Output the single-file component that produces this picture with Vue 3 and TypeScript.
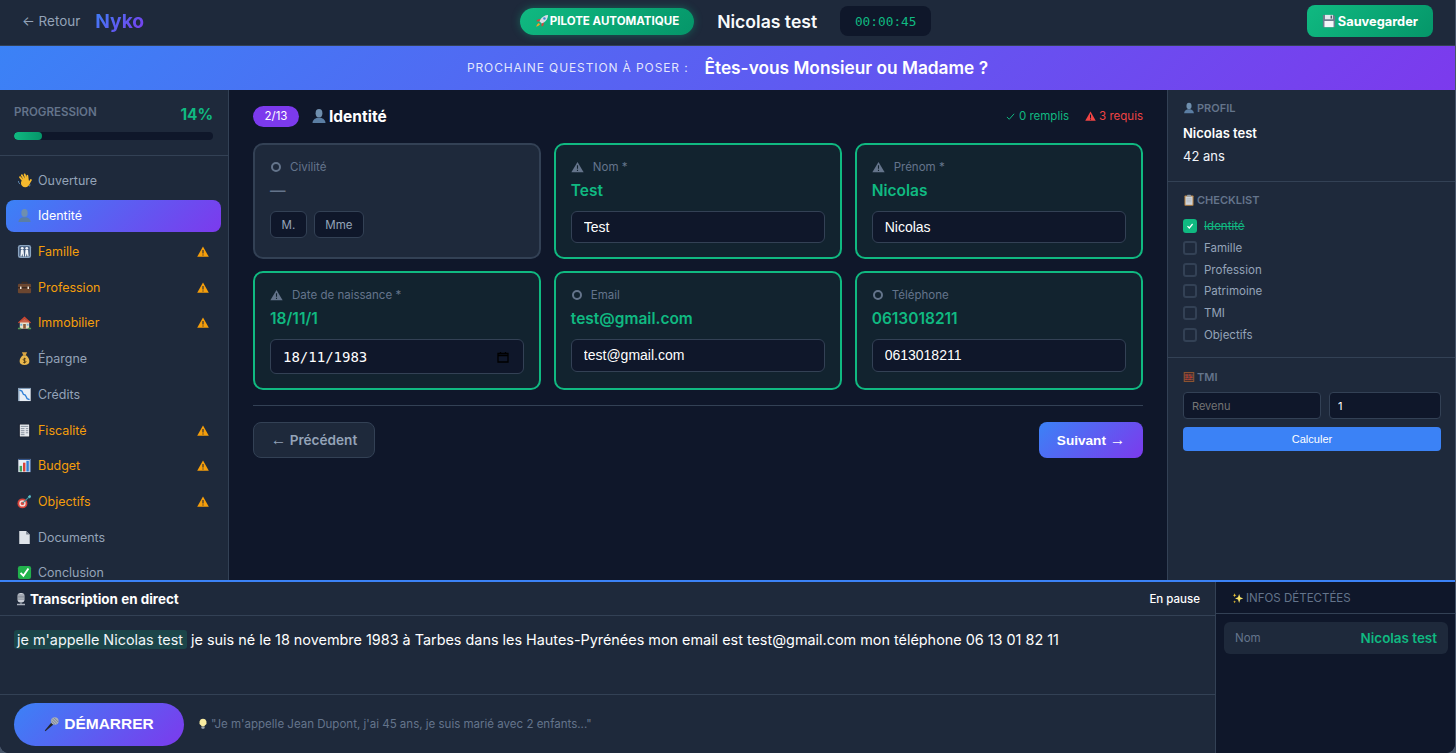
<script setup lang="ts">
interface NavItem { icon: string; label: string; warn?: boolean; active?: boolean }
const nav: NavItem[] = [
  { icon: 'wave', label: 'Ouverture' },
  { icon: 'bust', label: 'Identité', active: true },
  { icon: 'family', label: 'Famille', warn: true },
  { icon: 'case', label: 'Profession', warn: true },
  { icon: 'house', label: 'Immobilier', warn: true },
  { icon: 'bag', label: 'Épargne' },
  { icon: 'down', label: 'Crédits' },
  { icon: 'receipt', label: 'Fiscalité', warn: true },
  { icon: 'bars', label: 'Budget', warn: true },
  { icon: 'target', label: 'Objectifs', warn: true },
  { icon: 'doc', label: 'Documents' },
  { icon: 'check', label: 'Conclusion' },
]
interface Field { label: string; value: string; input: string }
const row2: Field[] = [
  { label: 'Email', value: 'test@gmail.com', input: 'test@gmail.com' },
  { label: 'Téléphone', value: '0613018211', input: '0613018211' },
]
const row1: Field[] = [
  { label: 'Nom *', value: 'Test', input: 'Test' },
  { label: 'Prénom *', value: 'Nicolas', input: 'Nicolas' },
]
const checklist = ['Famille', 'Profession', 'Patrimoine', 'TMI', 'Objectifs']
</script>

<template>
  <svg class="defs" width="0" height="0" aria-hidden="true">
    <symbol id="i-wave" viewBox="0 0 16 16">
      <path d="M7 9 3.200 4.400M8.500 8 5.200 2.400M10 7.500 8.200 1.600M11.600 8 11 3M12.400 11.500 14.800 7.500" stroke="#f5b92e" stroke-width="2" stroke-linecap="round" fill="none"/>
      <circle cx="8.800" cy="10.600" r="4.600" fill="#f5b92e"/>
      <path d="M1.400 8.500c.2 1.500.8 2.600 1.800 3.400M14.200 12.500c-.3.800-.8 1.400-1.400 1.800" stroke="#7fb4e8" stroke-width=".7" fill="none"/>
    </symbol>
    <symbol id="i-bust" viewBox="0 0 16 16">
      <ellipse cx="8" cy="5.200" rx="3.400" ry="4.200" fill="#6f8fae"/>
      <path d="M1.500 15c0-3 2.600-4.600 4.800-5.200h3.400c2.200.6 4.800 2.200 4.800 5.200Z" fill="#5b7ea3"/>
    </symbol>
    <symbol id="i-family" viewBox="0 0 16 16">
      <rect x="1" y="1" width="14" height="14" rx="2.500" fill="#8aa4c0"/>
      <rect x="2.400" y="2.400" width="11.200" height="11.200" rx="1.500" fill="#42597a"/>
      <circle cx="5.600" cy="4.600" r="1.500" fill="#f0f4f8"/><circle cx="10.400" cy="4.600" r="1.500" fill="#f0f4f8"/>
      <path d="M4.200 6.400h2.800l.6 7H6.300L5.600 10l-.7 3.400H3.600ZM9 6.400h2.800l.6 7h-1.300L10.400 10l-.7 3.400H8.400Z" fill="#f0f4f8"/>
    </symbol>
    <symbol id="i-case" viewBox="0 0 16 16">
      <path d="M5.500 4V2.600h5V4" fill="none" stroke="#3d2b20" stroke-width="1.300"/>
      <rect x="1" y="4" width="14" height="10.200" rx="1.200" fill="#6b4630"/>
      <rect x="1" y="7.600" width="14" height="1.300" fill="#35251c"/>
      <rect x="3.200" y="7" width="1.600" height="2.600" fill="#efe6d8"/><rect x="11.200" y="7" width="1.600" height="2.600" fill="#efe6d8"/>
    </symbol>
    <symbol id="i-house" viewBox="0 0 16 16">
      <rect x="3" y="7" width="10" height="7.600" fill="#eadfc9"/>
      <path d="M1 8 8 1.600 15 8l-1 .8L8 3.600 2 8.800Z" fill="#d2452f"/>
      <path d="M8 3.600 13 7.500V8H3v-.5Z" fill="#c9624a"/>
      <rect x="6.600" y="9.600" width="2.800" height="5" fill="#8a5a3a"/>
      <rect x="3.600" y="9.400" width="2" height="2" fill="#6fb2de"/><rect x="10.400" y="9.400" width="2" height="2" fill="#6fb2de"/>
      <path d="M1 15.300h3.500v-1.700H1ZM11.500 15.300H15v-1.700h-3.500Z" fill="#4f9a55"/>
    </symbol>
    <symbol id="i-bag" viewBox="0 0 16 16">
      <path d="M5.200 1.400h5.600L9.300 4.400H6.700Z" fill="#d9a441"/>
      <path d="M6.400 4.600h3.200c2.200 1.800 3.600 4 3.600 6.200 0 2.800-2 4-5.200 4s-5.200-1.200-5.200-4c0-2.200 1.400-4.400 3.600-6.200Z" fill="#e8b64c"/>
      <path d="M9.600 8.600C9 7.900 6.600 7.800 6.600 9.200c0 1.500 3 .8 3 2.200 0 1.300-2.400 1.300-3.200.5M8 7.200v6" fill="none" stroke="#4a3512" stroke-width=".9"/>
    </symbol>
    <symbol id="i-down" viewBox="0 0 16 16">
      <rect x="1.400" y="1" width="13.200" height="14" fill="#e8eef5"/>
      <path d="M1.400 1h13.200v1.200H2.600V15H1.400Z" fill="#7f9bb8"/>
      <path d="M2.800 3.400 5.200 4.400 6.800 7.800 8.800 8.600l2 3.800 2.600 1" fill="none" stroke="#2f7fd6" stroke-width="1.400"/>
    </symbol>
    <symbol id="i-receipt" viewBox="0 0 16 16">
      <rect x="2" y="1" width="12" height="14" fill="#101827"/>
      <rect x="3" y="1.600" width="10" height="12.800" fill="#e6e9ee"/>
      <path d="M4 3.600h8M4 6h4M9.400 6H12M4 8.200h4M9.400 8.200H12M4 10.400h4M9.400 10.400H12M4 12.400h4" stroke="#6a7686" stroke-width=".8"/>
    </symbol>
    <symbol id="i-bars" viewBox="0 0 16 16">
      <rect x="1.400" y="1" width="13.200" height="14" fill="#e8eef5"/>
      <path d="M1.400 1h13.200v14h-1V2H1.400Z" fill="#33548a"/>
      <rect x="2.800" y="8.400" width="2.600" height="6" fill="#3fa35a"/>
      <rect x="6.400" y="5" width="2.600" height="9.400" fill="#d8433a"/>
      <rect x="10" y="3" width="2.600" height="11.400" fill="#2f7fd6"/>
    </symbol>
    <symbol id="i-target" viewBox="0 0 16 16">
      <circle cx="5.800" cy="10" r="5.300" fill="#d8433a"/><circle cx="5.800" cy="10" r="3.400" fill="#f3d9d4"/><circle cx="5.800" cy="10" r="1.800" fill="#d8433a"/>
      <path d="M6 9.800 13 3" stroke="#3f8f9a" stroke-width="1.300"/>
      <path d="M11.600 2.600 14 .8l1 2.200-1.400 1.800Z" fill="#5cc0c8"/>
    </symbol>
    <symbol id="i-doc" viewBox="0 0 16 16">
      <path d="M2.400 1h7.400l3.800 3.800V15H2.400Z" fill="#dfe4ea"/>
      <path d="M9.800 1v3.800h3.800Z" fill="#767f8c"/>
    </symbol>
    <symbol id="i-check" viewBox="0 0 16 16">
      <rect x="1" y="1" width="14" height="14" rx="2.400" fill="#22b14c"/>
      <path d="m3.800 8.400 3 3 5.400-7.600" fill="none" stroke="#fff" stroke-width="2"/>
    </symbol>
    <symbol id="i-studio" viewBox="0 0 16 16">
      <rect x="4" y="1" width="8" height="11" rx="3.500" fill="#c9ced6"/>
      <path d="M4 3.400h8M4 5h8M4 6.600h8M4 8.200h8" stroke="#5d6673" stroke-width=".7"/>
      <path d="M7.400 12h1.200v1.800H7.400ZM3.400 13.400h9.200V15H3.400Z" fill="#aab1bc"/>
    </symbol>
    <symbol id="i-mic" viewBox="0 0 16 16">
      <path d="m1.400 15.200-.6-.8 6.600-8 2 2Z" fill="#23262e"/>
      <circle cx="10.800" cy="5" r="3.800" fill="#aab1bc"/>
      <path d="M8.400 3 12.800 7.400M10 1.800l4.200 4.200M7.600 5l3.400 3.400" stroke="#5d6673" stroke-width=".6"/>
    </symbol>
    <symbol id="i-bulb" viewBox="0 0 16 16">
      <path d="M8 1a4.800 4.800 0 0 0-2.800 8.700c.6.500.8 1 .8 1.700h4c0-.7.2-1.200.8-1.700A4.800 4.800 0 0 0 8 1Z" fill="#f8eba0"/>
      <rect x="6.100" y="11.600" width="3.800" height="2.800" rx=".6" fill="#9aa3ae"/>
    </symbol>
    <symbol id="i-rocket" viewBox="0 0 16 16">
      <path d="M15 1c-3.600.2-6.400 1.800-8.600 4.800L4.800 8 8 11.200l2.200-1.600C13.200 7.400 14.800 4.600 15 1Z" fill="#d7dde6"/>
      <circle cx="10.800" cy="5.200" r="1.400" fill="#3a8ddb"/>
      <path d="M6.400 5.800 3 6.400 1.400 8.400l3.400.2ZM10.200 9.600l-.6 3.400-2 1.600-.2-3.400Z" fill="#d8433a"/>
      <path d="M4.200 10.200C2.800 11 2 12.600 1.400 14.600c2-.6 3.600-1.400 4.400-2.800Z" fill="#f5a623"/>
    </symbol>
    <symbol id="i-floppy" viewBox="0 0 16 16">
      <path d="M1 1h12.200L15 2.800V15H1Z" fill="#6e7c8e"/>
      <rect x="3.400" y="1" width="9" height="5" fill="#e3e8ee"/><rect x="9.800" y="1.800" width="1.600" height="3.400" fill="#4b5663"/>
      <rect x="2.800" y="8" width="10.400" height="7" fill="#f4f6f9"/>
    </symbol>
    <symbol id="i-clip" viewBox="0 0 16 16">
      <rect x="2" y="2" width="12" height="13.600" rx="1" fill="#c08a4a"/>
      <rect x="3.400" y="3.400" width="9.200" height="11" fill="#cdd3da"/>
      <path d="M4.800 6.400h6.400M4.800 8.400h6.400M4.800 10.400h6.400" stroke="#a6aeb8" stroke-width=".8"/>
      <rect x="5.400" y="1" width="5.200" height="2.800" rx=".6" fill="#8f9aa6"/>
    </symbol>
    <symbol id="i-abacus" viewBox="0 0 16 16">
      <rect x="1" y="1.500" width="14" height="13" fill="#9a5a30"/>
      <rect x="2.200" y="2.800" width="11.600" height="10.400" fill="#3a2630"/>
      <path d="M2.200 5.400h11.600M2.200 8.200h11.600M2.200 11h11.600" stroke="#c8a070" stroke-width=".6"/>
      <path d="M3.400 5.400h3.400M8 5.400h2.400M4.400 8.200h2.400M9 8.200h3.400M3.400 11h2.400M7.400 11h3.400" stroke="#d1342a" stroke-width="1.500"/>
    </symbol>
    <symbol id="i-spark" viewBox="0 0 16 16">
      <path d="M9.500 2.500 11 7l4 1.500L11 10 9.500 14.500 8 10 4 8.500 8 7Z" fill="#f7e36a"/>
      <path d="m3.500 1.500.7 2 1.800.7-1.800.7-.7 2-.7-2L1 4.200l1.800-.7ZM3.500 11l.5 1.500 1.500.5-1.500.5-.5 1.500-.5-1.500L1.500 13l1.500-.5Z" fill="#f2c933"/>
    </symbol>
  </svg>

  <div class="app">
    <header class="top">
      <div class="top-left">
        <span class="back">← Retour</span>
        <span class="logo">Nyko</span>
      </div>
      <div class="top-center">
        <span class="pilot"><svg class="ico i14"><use href="#i-rocket" /></svg>PILOTE AUTOMATIQUE</span>
        <span class="client">Nicolas test</span>
        <span class="timer">00:00:45</span>
      </div>
      <button class="save"><svg class="ico i14"><use href="#i-floppy" /></svg>Sauvegarder</button>
    </header>

    <div class="banner">
      <span class="banner-label">Prochaine question à poser :</span>
      <span class="banner-q">Êtes-vous Monsieur ou Madame ?</span>
    </div>

    <div class="middle">
      <aside class="side">
        <div class="prog">
          <div class="prog-head">
            <span class="prog-label">PROGRESSION</span>
            <span class="prog-val">14%</span>
          </div>
          <div class="prog-track"><div class="prog-fill" :style="{ width: '14%' }"></div></div>
        </div>
        <nav class="nav">
          <div v-for="n in nav" :key="n.label" class="nav-item" :class="{ active: n.active, warn: n.warn }">
            <svg class="ico nav-ico"><use :href="'#i-' + n.icon" /></svg>
            <span class="nav-label">{{ n.label }}</span>
            <svg v-if="n.warn" class="nav-warn" viewBox="0 0 12 11"><path d="M6 .5 11.800 10.800H.2Z" fill="#f59e0b" /><path d="M6 4v3.600M6 8.400v1.100" stroke="#1e293b" stroke-width="1.100" /></svg>
          </div>
        </nav>
      </aside>

      <main class="main">
        <div class="main-head">
          <span class="step">2/13</span>
          <span class="main-title"><svg class="ico i16"><use href="#i-bust" /></svg>Identité</span>
          <span class="stats">
            <span class="ok"><svg class="stat-ico" viewBox="0 0 10 10"><path d="m1 5.500 2.600 2.600L9 2" fill="none" stroke="#10b981" stroke-width="1.100" /></svg>0 remplis</span>
            <span class="bad"><svg class="stat-ico" viewBox="0 0 12 11"><path d="M6 .5 11.800 10.800H.2Z" fill="#ef4444" /><path d="M6 4v3.600M6 8.400v1.100" stroke="#0f172a" stroke-width="1.100" /></svg>3 requis</span>
          </span>
        </div>

        <div class="grid">
          <section class="card">
            <div class="card-label"><span class="ring"></span>Civilité</div>
            <div class="card-value dash">—</div>
            <div class="choices"><button class="choice">M.</button><button class="choice">Mme</button></div>
          </section>
          <section v-for="f in row1" :key="f.label" class="card filled">
            <div class="card-label">
              <svg class="tri" viewBox="0 0 14 12"><path d="M7 .5 13.600 11.600H.4Z" fill="#64748b" /><path d="M7 4.200v3.800M7 9v1.300" stroke="#12232f" stroke-width="1.200" /></svg>{{ f.label }}
            </div>
            <div class="card-value">{{ f.value }}</div>
            <input class="field" :value="f.input" />
          </section>
          <section class="card filled">
            <div class="card-label">
              <svg class="tri" viewBox="0 0 14 12"><path d="M7 .5 13.600 11.600H.4Z" fill="#64748b" /><path d="M7 4.200v3.800M7 9v1.300" stroke="#12232f" stroke-width="1.200" /></svg>Date de naissance *
            </div>
            <div class="card-value">18/11/1</div>
            <div class="date-wrap">
              <input class="field date" value="18/11/1983" />
              <svg class="cal" viewBox="0 0 12 12"><path d="M1 2.500h10v8.500H1ZM1 4.500h10M3.500 1v2M8.500 1v2" fill="none" stroke="#000" stroke-width="1.300" /></svg>
            </div>
          </section>
          <section v-for="f in row2" :key="f.label" class="card filled">
            <div class="card-label"><span class="ring"></span>{{ f.label }}</div>
            <div class="card-value">{{ f.value }}</div>
            <input class="field" :value="f.input" />
          </section>
        </div>

        <div class="actions">
          <button class="prev"><span class="arrow">←</span> Précédent</button>
          <button class="next">Suivant <span class="arrow">→</span></button>
        </div>
      </main>

      <aside class="right">
        <section class="r-sec profil">
          <h3 class="r-title"><svg class="ico i12"><use href="#i-bust" /></svg>PROFIL</h3>
          <div class="r-name">Nicolas test</div>
          <div class="r-age">42 ans</div>
        </section>
        <section class="r-sec checks">
          <h3 class="r-title"><svg class="ico i12"><use href="#i-clip" /></svg>CHECKLIST</h3>
          <ul class="check-list">
            <li class="check-row done">
              <span class="box"><svg viewBox="0 0 10 10" class="tick"><path d="m2.500 5.200 1.800 1.800 3.300-4" fill="none" stroke="#fff" stroke-width="1.200" /></svg></span>Identité
            </li>
            <li v-for="c in checklist" :key="c" class="check-row"><span class="box"></span>{{ c }}</li>
          </ul>
        </section>
        <section class="r-sec tmi">
          <h3 class="r-title"><svg class="ico i12"><use href="#i-abacus" /></svg>TMI</h3>
          <div class="tmi-row">
            <input class="mini wide" placeholder="Revenu" />
            <input class="mini narrow" value="1" />
          </div>
          <button class="calc">Calculer</button>
        </section>
      </aside>
    </div>

    <div class="bottom">
      <div class="trans">
        <div class="trans-head">
          <span class="trans-title"><svg class="ico i14"><use href="#i-studio" /></svg>Transcription en direct</span>
          <span class="pause">En pause</span>
        </div>
        <div class="trans-body">
          <mark class="hl">je m'appelle Nicolas test</mark> je suis né le 18 novembre 1983 à Tarbes dans les Hautes-Pyrénées mon email est test@gmail.com mon téléphone 06 13 01 82 11
        </div>
        <div class="trans-foot">
          <button class="start"><svg class="ico i16"><use href="#i-mic" /></svg>DÉMARRER</button>
          <span class="hint"><svg class="ico i12"><use href="#i-bulb" /></svg>"Je m'appelle Jean Dupont, j'ai 45 ans, je suis marié avec 2 enfants..."</span>
        </div>
      </div>
      <div class="infos">
        <div class="infos-head"><svg class="ico i12"><use href="#i-spark" /></svg>INFOS DÉTECTÉES</div>
        <div class="infos-body">
          <div class="info"><span class="info-k">Nom</span><span class="info-v">Nicolas test</span></div>
        </div>
      </div>
    </div>
  </div>
</template>

<style>
html, body { margin: 0; background: #475569; }
</style>

<style scoped>
.defs { position: absolute; }
.app {
  width: 1455px; height: 753px; display: flex; flex-direction: column; overflow: hidden;
  border-radius: 0 0 9px 9px;
  font-family: Inter, "Liberation Sans", sans-serif; color: #f1f5f9; background: #0f172a;
}
.ico { display: block; flex: none; }
.i12 { width: 12px; height: 12px; }
.i14 { width: 14px; height: 14px; }
.i16 { width: 16px; height: 16px; }

.top {
  height: 42px; flex: none; display: flex; align-items: center; justify-content: space-between;
  padding: 0 22px 3px 22px; background: #1e293b; border-bottom: 1px solid #334155;
}
.top-left { display: flex; align-items: center; gap: 15px; }
.back { font-size: 13.440px; color: #94a3b8; }
.logo {
  font-size: 19.200px; font-weight: 700;
  background: linear-gradient(135deg, #3b82f6, #7c3aed); -webkit-background-clip: text; background-clip: text; color: transparent;
}
.top-center { display: flex; align-items: center; gap: 23px; }
.pilot {
  display: flex; align-items: center; gap: 1px; height: 27px; padding: 0 15px; border-radius: 14px;
  font-size: 11.520px; font-weight: 700; color: #fff; background: linear-gradient(135deg, #10b981, #059669);
  box-shadow: 0 0 8px rgba(16, 185, 129, 0.4);
}
.client { font-size: 17.600px; font-weight: 600; color: #f8fafc; }
.timer {
  display: flex; align-items: center; justify-content: center; width: 91px; height: 30px; border-radius: 8px;
  background: #0f172a; font-family: "DejaVu Sans Mono", monospace; font-size: 12.800px; color: #10b981;
}
.save {
  display: flex; align-items: center; gap: 2px; height: 32px; padding: 0 15px; border: 0; border-radius: 8px;
  font-family: Inter, sans-serif; font-size: 12.800px; font-weight: 700; color: #fff;
  background: linear-gradient(135deg, #10b981, #059669);
}

.banner {
  height: 44px; flex: none; display: flex; align-items: center; justify-content: center; gap: 16px;
  padding-bottom: 1px; box-sizing: border-box;
  background: linear-gradient(135deg, #3b82f6, #7c3aed);
}
.banner-label { font-size: 12px; letter-spacing: 0.880px; text-transform: uppercase; color: rgba(255, 255, 255, 0.85); }
.banner-q { font-size: 17.300px; font-weight: 600; color: #fff; }

.middle { flex: 1; min-height: 0; display: flex; }
.side {
  width: 229px; flex: none; box-sizing: border-box; background: #1e293b; border-right: 1px solid #334155;
  overflow: hidden;
}
.prog { height: 66px; box-sizing: border-box; padding: 15px 15px 0 14px; border-bottom: 1px solid #334155; }
.prog-head { display: flex; justify-content: space-between; align-items: flex-start; height: 20px; margin-bottom: 7px; }
.prog-label { font-size: 11.520px; line-height: 14px; font-weight: 600; color: #64748b; }
.prog-val { font-size: 15.360px; line-height: 20px; font-weight: 700; color: #10b981; }
.prog-track { height: 8px; border-radius: 4px; background: #0f172a; overflow: hidden; }
.prog-fill { height: 100%; border-radius: 4px; background: linear-gradient(90deg, #10b981, #059669); }
.nav { padding: 8px 7px 0 6px; display: flex; flex-direction: column; gap: 3.720px; }
.nav-item {
  height: 32px; flex: none; display: flex; align-items: center; padding: 0 12px 0 11px; border-radius: 8px;
  font-size: 12.480px; color: #94a3b8;
}
.nav-item.warn { color: #f59e0b; }
.nav-item.active { color: #fff; background: linear-gradient(135deg, #3b82f6, #7c3aed); }
.nav-ico { width: 15px; height: 15px; margin-right: 6px; }
.nav-label { flex: 1; }
.nav-warn { width: 12px; height: 11px; }

.main { flex: 1; min-width: 0; padding: 15px 24px 0; background: #0f172a; }
.main-head { display: flex; align-items: center; height: 22px; margin-bottom: 16px; }
.step {
  width: 46px; height: 21px; border-radius: 11px; background: #7c3aed; color: #fff; font-size: 11.520px;
  display: flex; align-items: center; justify-content: center; margin-right: 12px;
}
.main-title { display: flex; align-items: center; gap: 2px; font-size: 15.500px; font-weight: 700; color: #fff; }
.stats { margin-left: auto; display: flex; gap: 16px; font-size: 11.520px; }
.ok, .bad { display: flex; align-items: center; gap: 4px; }
.ok { color: #10b981; }
.bad { color: #ef4444; gap: 3px; }
.stat-ico { width: 9px; height: 9px; }
.bad .stat-ico { width: 11px; height: 10px; }

.grid { display: grid; grid-template-columns: repeat(3, 1fr); gap: 12.500px; padding-bottom: 15.500px; border-bottom: 1px solid #334155; }
.card {
  box-sizing: border-box; padding: 15px 15px 13.400px; border: 2px solid #334155; border-radius: 10px; background: #1e293b;
}
.card.filled { border-color: #10b981; background: #12232f; }
.card-label { display: flex; align-items: center; gap: 9px; height: 14px; font-size: 11.520px; color: #64748b; }
.ring { width: 10px; height: 10px; box-sizing: border-box; border: 2px solid #64748b; border-radius: 50%; margin-left: 1px; flex: none; }
.tri { width: 13px; height: 12px; flex: none; }
.card-value { height: 20px; margin: 7px 0 10px; font-size: 15.500px; line-height: 20px; font-weight: 600; color: #10b981; }
.card-value.dash { color: #64748b; }
.choices { display: flex; gap: 7px; }
.choice {
  height: 27px; padding: 0 10.500px; border: 1px solid #334155; border-radius: 6px; background: #0f172a;
  color: #94a3b8; font-family: Inter, sans-serif; font-size: 11.520px;
}
.field {
  display: block; width: 100%; box-sizing: border-box; height: 32.400px; padding: 0 12px; border: 1px solid #334155;
  border-radius: 6px; background: #0f172a; color: #fff; font-family: "Liberation Sans", Arial, sans-serif; font-size: 14px; outline: none;
}
.date-wrap { position: relative; }
.field.date { height: 35px; font-family: "DejaVu Sans Mono", monospace; }
.cal { position: absolute; right: 15px; top: 12px; width: 12px; height: 12px; }

.actions { display: flex; justify-content: space-between; margin-top: 16px; }
.prev {
  height: 36px; width: 122px; border: 1px solid #334155; border-radius: 8px; background: #1e293b; color: #94a3b8;
  font-family: Inter, sans-serif; font-size: 13.600px; font-weight: 600;
}
.arrow { font-family: "Liberation Sans", Arial, sans-serif; font-weight: 400; font-size: 15.500px; line-height: 1; }
.next {
  height: 36px; width: 104px; border: 0; border-radius: 8px; color: #fff;
  font-family: "Liberation Sans", Arial, sans-serif; font-size: 13.600px; font-weight: 700;
  background: linear-gradient(135deg, #3b82f6, #7c3aed);
}

.right { width: 288px; flex: none; box-sizing: border-box; background: #1e293b; border-left: 1px solid #334155; }
.r-sec { padding: 12px 15px 0; border-bottom: 1px solid #334155; }
.r-sec:last-child { border-bottom: 0; }
.profil { height: 92px; box-sizing: border-box; }
.checks { height: 176px; box-sizing: border-box; }
.r-title { display: flex; align-items: center; gap: 2px; height: 12px; margin: 0; font-size: 11px; font-weight: 600; color: #64748b; }
.r-name { margin-top: 11px; font-size: 13px; font-weight: 600; color: #fff; line-height: 16px; }
.r-age { margin-top: 7px; font-size: 13px; color: #f1f5f9; line-height: 16px; }
.check-list { list-style: none; margin: 13px 0 0; padding: 0; display: flex; flex-direction: column; gap: 7.750px; }
.check-row { display: flex; align-items: center; gap: 7px; height: 14px; font-size: 11.520px; color: #94a3b8; }
.box { width: 14px; height: 14px; box-sizing: border-box; border: 2px solid #334155; border-radius: 3px; flex: none; }
.done { color: #10b981; text-decoration: line-through; }
.done .box { background: #10b981; border-color: #10b981; }
.tick { display: block; width: 10px; height: 10px; }
.tmi { padding-top: 13px; }
.tmi-row { display: flex; gap: 8px; margin-top: 9px; }
.mini {
  box-sizing: border-box; height: 27px; padding: 0 8px; border: 1px solid #334155; border-radius: 4px;
  background: #0f172a; color: #fff; font-family: Inter, sans-serif; font-size: 11px; outline: none;
}
.mini.wide { width: 138px; }
.mini.narrow { width: 112px; }
.mini::placeholder { color: #757575; }
.calc {
  display: block; width: 258px; height: 24px; margin-top: 8px; border: 0; border-radius: 4px; background: #3b82f6; color: #fff;
  font-family: "Liberation Sans", Arial, sans-serif; font-size: 11px;
}

.bottom { height: 173px; flex: none; display: flex; border-top: 2px solid #3b82f6; box-sizing: border-box; }
.trans { flex: 1; min-width: 0; display: flex; flex-direction: column; background: #1e293b; }
.trans-head {
  height: 34px; flex: none; box-sizing: border-box; display: flex; align-items: center; justify-content: space-between;
  padding: 0 15px 0 14px; border-bottom: 1px solid #334155;
}
.trans-title { display: flex; align-items: center; gap: 2px; font-size: 13.440px; font-weight: 700; color: #fff; }
.pause { font-size: 11.520px; font-weight: 500; color: #fff; }
.trans-body { flex: 1; padding: 13px 14px 0; font-size: 14.400px; line-height: 22px; color: #fff; }
.hl { background: rgba(16, 185, 129, 0.2); color: #f1f5f9; padding: 1px 4px 1px 3px; border-radius: 3px; }
.trans-foot {
  height: 59px; flex: none; box-sizing: border-box; display: flex; align-items: center; gap: 13px; padding: 0 14px;
  border-top: 1px solid #334155;
}
.start {
  width: 170px; height: 43px; display: flex; align-items: center; justify-content: center; gap: 4px; border: 0; border-radius: 22px;
  color: #fff; background: linear-gradient(135deg, #3b82f6, #7c3aed);
  font-family: "Liberation Sans", Arial, sans-serif; font-size: 15.500px; font-weight: 700;
}
.hint { display: flex; align-items: center; gap: 2px; font-size: 11.520px; color: #64748b; }
.infos { width: 240px; flex: none; box-sizing: border-box; background: #0f172a; border-left: 1px solid #334155; }
.infos-head {
  height: 32px; box-sizing: border-box; display: flex; align-items: center; gap: 2px; padding: 0 16px;
  border-bottom: 1px solid #334155; font-size: 11.520px; color: #64748b;
}
.infos-body { padding: 8px 7px 0 8px; }
.info {
  height: 32px; display: flex; align-items: center; justify-content: space-between; padding: 0 11px;
  border-radius: 6px; background: #1e293b;
}
.info-k { font-size: 11.520px; color: #64748b; }
.info-v { font-size: 13.440px; font-weight: 600; color: #10b981; }
</style>
